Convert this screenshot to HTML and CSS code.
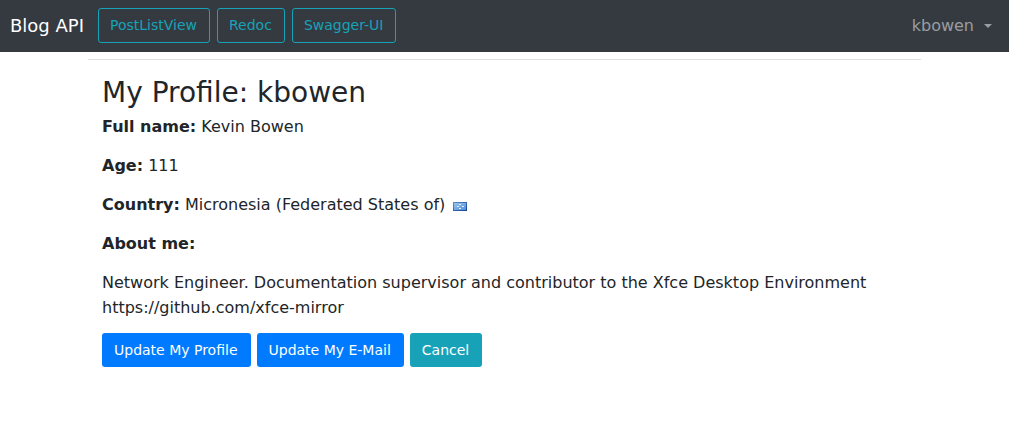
FILE: index.html
```html
<!DOCTYPE html>
<html lang="en">
<head>
<meta charset="utf-8">
<meta name="viewport" content="width=device-width, initial-scale=1">
<title>My Profile</title>
<link rel="stylesheet" href="styles.css">
</head>
<body>
<header class="navbar">
  <a class="brand" href="#">Blog API</a>
  <nav class="links">
    <a class="btn btn-outline" href="#">PostListView</a>
    <a class="btn btn-outline" href="#">Redoc</a>
    <a class="btn btn-outline" href="#">Swagger-UI</a>
  </nav>
  <button class="user-menu" type="button" aria-haspopup="true">kbowen<span class="caret"></span></button>
</header>
<main class="container">
  <section class="profile">
    <h1 class="title">My Profile: kbowen</h1>
    <p class="row"><strong>Full name:</strong> Kevin Bowen</p>
    <p class="row"><strong>Age:</strong> 111</p>
    <p class="row"><strong>Country:</strong> Micronesia (Federated States of)
      <svg class="flag" width="14" height="9" viewBox="0 0 14 9" role="img" aria-label="Flag of Micronesia">
        <defs><linearGradient id="sky" x1="0" y1="0" x2="1" y2="1"><stop offset="0" stop-color="#9cc3ec"/><stop offset="1" stop-color="#4f8fd6"/></linearGradient>
        <linearGradient id="edge" x1="0" y1="0" x2="1" y2="1"><stop offset="0" stop-color="#5d8fcb"/><stop offset="1" stop-color="#0d3f92"/></linearGradient></defs>
        <rect width="14" height="9" fill="url(#edge)"/><rect x="1" y="1" width="12" height="7" fill="url(#sky)"/>
        <path d="M6 2h2v1H6zM4 4h2v1H4zM9 4h2v1H9zM6 6h2v1H6z" fill="#e3effb"/>
      </svg></p>
    <p class="row"><strong>About me:</strong></p>
    <p class="row">Network Engineer. Documentation supervisor and contributor to the Xfce Desktop Environment<br>https://github.com/xfce-mirror</p>
    <div class="actions">
      <a class="btn btn-primary" href="#">Update My Profile</a>
      <a class="btn btn-primary" href="#">Update My E-Mail</a>
      <a class="btn btn-info" href="#">Cancel</a>
    </div>
  </section>
</main>
</body>
</html>
```
FILE: styles.css
```css
* { box-sizing: border-box; }
body {
  margin: 0;
  background: #fff;
  color: #212529;
  font: 16px/25px "DejaVu Sans", sans-serif;
}
.navbar {
  display: flex;
  align-items: center;
  padding: 8px 17px 9px 10px;
  background: #343a40;
}
.brand {
  margin-right: 14px;
  color: #fff;
  font-size: 18px;
  text-decoration: none;
}
.links { display: flex; gap: 7px; }
.btn {
  display: inline-block;
  padding: 6px 12px 6px 11px;
  border: 1px solid transparent;
  border-radius: 3px;
  font-size: 14px;
  line-height: 21px;
  text-decoration: none;
}
.btn-outline { color: #17a2b8; border-color: #17a2b8; }
.btn-primary { color: #fff; background: #007bff; }
.btn-info { color: #fff; background: #17a2b8; }
.user-menu {
  display: flex;
  align-items: center;
  gap: 10px;
  margin-left: auto;
  padding: 0;
  border: 0;
  background: none;
  color: #9a9da0;
  font: inherit;
}
.caret {
  border-top: 4px solid;
  border-left: 4px solid transparent;
  border-right: 4px solid transparent;
}
.container { margin: 7px 88px 0; border-top: 1px solid #dfe0e1; }
.profile { padding: 16px 14px; }
.title {
  margin: 0 0 4px;
  font-size: 28px;
  font-weight: 400;
  line-height: 34px;
}
.row { margin: 0 0 14px; }
.row:last-of-type { margin-bottom: 13px; }
.flag { margin-left: 3px; vertical-align: -1px; }
.actions { display: flex; flex-wrap: wrap; gap: 6px; }
.actions .btn { line-height: 20px; }
```
